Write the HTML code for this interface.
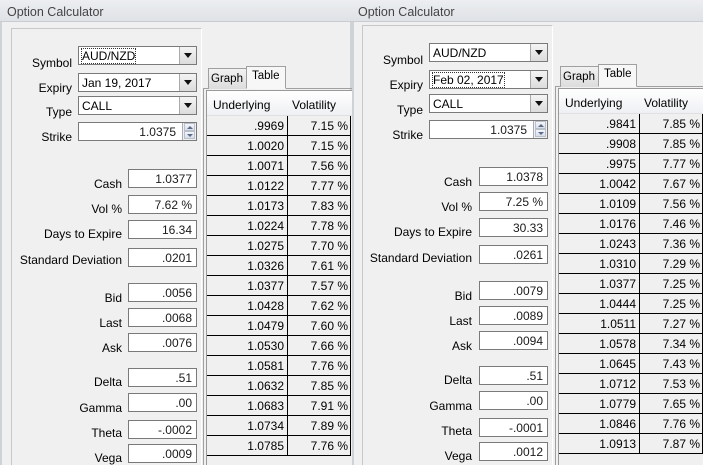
<!DOCTYPE html>
<html><head><meta charset="utf-8"><style>
*{box-sizing:border-box;margin:0;padding:0}
body{width:703px;height:465px;overflow:hidden;background:#f0f0f0;font-family:"Liberation Sans",Arial,sans-serif;font-size:12px;color:#000;position:relative}
.win{position:absolute;top:0;height:465px;background:#f0f0f0;overflow:hidden}
.title{position:absolute;left:0;top:0;right:0;height:22px;background:linear-gradient(#eceef1,#dfe2e6);border-bottom:1px solid #c9ccd1;color:#444;font-size:12.5px;padding:5px 0 0 7px}
.frame{position:absolute;top:22px;bottom:0;left:0;right:0;border-left:2px solid #cfd3d8;border-right:2px solid #cfd3d8}
.panel{position:absolute;left:11px;top:28px;width:191px;height:450px;border:1px solid #c8c8c8;border-right-color:#fff;border-bottom:none}
.lbl{position:absolute;text-align:right;white-space:nowrap}
.box{position:absolute;background:#fff;border:1px solid #7a7a7a;text-align:right;padding:2px 4px 0 0;height:19px;color:#1a1a1a}
.combo{position:absolute;left:78px;width:119px;height:19px;background:#fff;border:1px solid #7a7a7a;padding:2px 0 0 3px}
.combo .btn{position:absolute;right:0;top:0;width:17px;height:17px;background:linear-gradient(#f4f4f4,#dcdcdc);border-left:1px solid #aaa}
.combo .btn:after{content:"";position:absolute;left:4px;top:6px;border-left:4px solid transparent;border-right:4px solid transparent;border-top:5px solid #111}
.spin{position:absolute;right:0;top:0;width:14px;height:17px;background:#f0f0f0;border-left:1px solid #aab}
.spin i{position:absolute;left:1px;width:11px;height:8px;background:linear-gradient(#f4f6fa,#d8dee8);border:1px solid #b8c0cc}
.spin i:after{content:"";position:absolute;left:2px;top:2px;border-left:3px solid transparent;border-right:3px solid transparent}
.spin i.u:after{border-bottom:3px solid #5a6a88}
.spin i.d:after{border-top:3px solid #5a6a88}
.tab{position:absolute;border:1px solid #a0a0a0;border-bottom:none;padding:4px 0 0 2px;background:linear-gradient(#f2f2f2,#dcdcdc);font-size:11.5px;white-space:nowrap;overflow:hidden}
.tab.act{background:#f7f7f7;padding-top:3px;padding-left:5px}
.tbl{position:absolute;border-left:1px solid #999;border-top:1px solid #999;background:#f0f0f0}
.hdr{position:absolute;left:0;right:0;top:0;height:25px;background:linear-gradient(#fff,#eef0f3);border-bottom:1px solid #e0e0e0}
.hdr span{position:absolute;top:7px}
.row{position:absolute;left:0;height:20px;border-bottom:1px solid #000}
.row span{position:absolute;top:3px;text-align:right}
.vline{position:absolute;width:1px;background:#000}
</style></head><body>

<!-- LEFT WINDOW -->
<div class="win" style="left:0;width:352px">
<div class="title">Option Calculator</div>
<div class="frame"></div>
<div class="panel"></div>
<div class="lbl" style="right:280px;top:56px">Symbol</div>
<div class="combo" style="top:46px"><span style="outline:1px dotted #333">AUD/NZD</span><div class="btn"></div></div>
<div class="lbl" style="right:280px;top:81px">Expiry</div>
<div class="combo" style="top:73px">Jan 19, 2017<div class="btn"></div></div>
<div class="lbl" style="right:280px;top:105px">Type</div>
<div class="combo" style="top:96px">CALL<div class="btn"></div></div>
<div class="lbl" style="right:280px;top:130px">Strike</div>
<div class="box" style="left:78px;top:122px;width:119px;padding-right:20px">1.0375<div class="spin"><i class="u" style="top:0"></i><i class="d" style="top:8px"></i></div></div>

<div class="lbl" style="right:230px;top:177px">Cash</div><div class="box" style="left:128px;top:169px;width:69px">1.0377</div>
<div class="lbl" style="right:230px;top:202px">Vol %</div><div class="box" style="left:128px;top:195px;width:69px">7.62 %</div>
<div class="lbl" style="right:230px;top:227px">Days to Expire</div><div class="box" style="left:128px;top:220px;width:69px">16.34</div>
<div class="lbl" style="right:230px;top:253px">Standard Deviation</div><div class="box" style="left:128px;top:248px;width:69px">.0201</div>
<div class="lbl" style="right:230px;top:291px">Bid</div><div class="box" style="left:128px;top:283px;width:69px">.0056</div>
<div class="lbl" style="right:230px;top:316px">Last</div><div class="box" style="left:128px;top:308px;width:69px">.0068</div>
<div class="lbl" style="right:230px;top:341px">Ask</div><div class="box" style="left:128px;top:333px;width:69px">.0076</div>
<div class="lbl" style="right:230px;top:375px">Delta</div><div class="box" style="left:128px;top:368px;width:69px">.51</div>
<div class="lbl" style="right:230px;top:401px">Gamma</div><div class="box" style="left:128px;top:393px;width:69px">.00</div>
<div class="lbl" style="right:230px;top:426px">Theta</div><div class="box" style="left:128px;top:420px;width:69px">-.0002</div>
<div class="lbl" style="right:230px;top:451px">Vega</div><div class="box" style="left:128px;top:444px;width:69px">.0009</div>

<div style="position:absolute;left:203px;top:88px;width:150px;height:380px;border-top:1px solid #a0a0a0;border-left:1px solid #a0a0a0"></div>
<div class="tab" style="left:208px;top:68px;width:39px;height:21px">Graph</div>
<div class="tab act" style="left:246px;top:66px;width:40px;height:23px;border-bottom:1px solid #f7f7f7">Table</div>
<div class="tbl" style="left:206px;top:90px;width:146px;height:380px">
<div class="hdr"><span style="left:6px">Underlying</span><span style="left:85px">Volatility</span></div>
<div id="L"></div>
</div>
</div>

<!-- RIGHT WINDOW -->
<div class="win" style="left:352px;width:351px">
<div class="title" style="padding-left:6px">Option Calculator</div>
<div class="frame" style="border-right:none"></div>
<div class="panel" style="left:10px;top:25px"></div>
<div class="lbl" style="right:280px;top:53px">Symbol</div>
<div class="combo" style="top:43px;left:77px">AUD/NZD<div class="btn"></div></div>
<div class="lbl" style="right:280px;top:78px">Expiry</div>
<div class="combo" style="top:70px;left:77px"><span style="outline:1px dotted #333">Feb 02, 2017</span><div class="btn"></div></div>
<div class="lbl" style="right:280px;top:103px">Type</div>
<div class="combo" style="top:94px;left:77px">CALL<div class="btn"></div></div>
<div class="lbl" style="right:280px;top:128px">Strike</div>
<div class="box" style="left:77px;top:120px;width:119px;padding-right:20px">1.0375<div class="spin"><i class="u" style="top:0"></i><i class="d" style="top:8px"></i></div></div>

<div class="lbl" style="right:231px;top:175px">Cash</div><div class="box" style="left:127px;top:167px;width:69px">1.0378</div>
<div class="lbl" style="right:231px;top:200px">Vol %</div><div class="box" style="left:127px;top:192px;width:69px">7.25 %</div>
<div class="lbl" style="right:231px;top:225px">Days to Expire</div><div class="box" style="left:127px;top:218px;width:69px">30.33</div>
<div class="lbl" style="right:231px;top:251px">Standard Deviation</div><div class="box" style="left:127px;top:245px;width:69px">.0261</div>
<div class="lbl" style="right:231px;top:289px">Bid</div><div class="box" style="left:127px;top:281px;width:69px">.0079</div>
<div class="lbl" style="right:231px;top:314px">Last</div><div class="box" style="left:127px;top:306px;width:69px">.0089</div>
<div class="lbl" style="right:231px;top:339px">Ask</div><div class="box" style="left:127px;top:331px;width:69px">.0094</div>
<div class="lbl" style="right:231px;top:373px">Delta</div><div class="box" style="left:127px;top:366px;width:69px">.51</div>
<div class="lbl" style="right:231px;top:399px">Gamma</div><div class="box" style="left:127px;top:391px;width:69px">.00</div>
<div class="lbl" style="right:231px;top:424px">Theta</div><div class="box" style="left:127px;top:418px;width:69px">-.0001</div>
<div class="lbl" style="right:231px;top:449px">Vega</div><div class="box" style="left:127px;top:442px;width:69px">.0012</div>

<div style="position:absolute;left:203px;top:86px;width:150px;height:380px;border-top:1px solid #a0a0a0;border-left:1px solid #a0a0a0"></div>
<div class="tab" style="left:208px;top:66px;width:39px;height:21px">Graph</div>
<div class="tab act" style="left:246px;top:64px;width:39px;height:23px;border-bottom:1px solid #f7f7f7">Table</div>
<div class="tbl" style="left:206px;top:88px;width:146px;height:380px">
<div class="hdr"><span style="left:6px">Underlying</span><span style="left:85px">Volatility</span></div>
<div id="R"></div>
</div>
</div>

<script>
function fill(id,data,w){var h='';data.forEach(function(d,i){h+='<div class="row" style="top:'+(25+i*20)+'px;width:'+w+'px"><span style="left:0;width:77px">'+d[0]+'</span><span style="left:80px;width:61px">'+d[1]+'</span></div>';});
h+='<div class="vline" style="left:80px;top:25px;height:'+(data.length*20)+'px"></div><div class="vline" style="left:'+(w-1)+'px;top:25px;height:'+(data.length*20)+'px"></div>';
document.getElementById(id).innerHTML=h;}
fill('L',[['.9969','7.15 %'],['1.0020','7.15 %'],['1.0071','7.56 %'],['1.0122','7.77 %'],['1.0173','7.83 %'],['1.0224','7.78 %'],['1.0275','7.70 %'],['1.0326','7.61 %'],['1.0377','7.57 %'],['1.0428','7.62 %'],['1.0479','7.60 %'],['1.0530','7.66 %'],['1.0581','7.76 %'],['1.0632','7.85 %'],['1.0683','7.91 %'],['1.0734','7.89 %'],['1.0785','7.76 %']],144);
fill('R',[['.9841','7.85 %'],['.9908','7.85 %'],['.9975','7.77 %'],['1.0042','7.67 %'],['1.0109','7.56 %'],['1.0176','7.46 %'],['1.0243','7.36 %'],['1.0310','7.29 %'],['1.0377','7.25 %'],['1.0444','7.25 %'],['1.0511','7.27 %'],['1.0578','7.34 %'],['1.0645','7.43 %'],['1.0712','7.53 %'],['1.0779','7.65 %'],['1.0846','7.76 %'],['1.0913','7.87 %']],144);
</script>
</body></html>
